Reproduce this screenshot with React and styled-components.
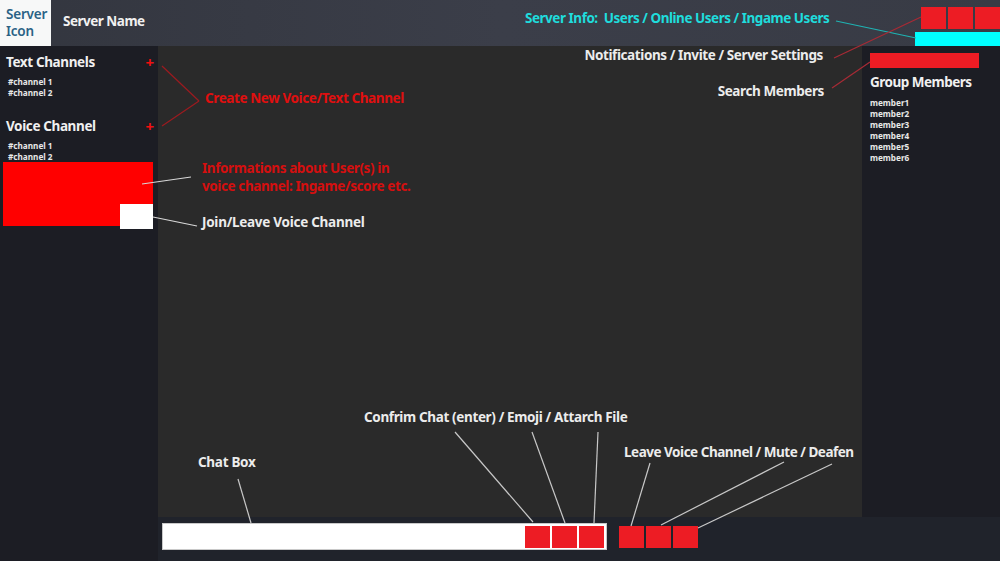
import styled, { createGlobalStyle } from 'styled-components';

const GlobalStyle = createGlobalStyle`
    html, body {
        margin: 0;
        padding: 0;
        background: #1c1d24;
    }
    body {
        font-family: "Noto Sans", "Open Sans", sans-serif;
    }
`;

const textChannels = ['#channel 1', '#channel 2'];
const voiceChannels = ['#channel 1', '#channel 2'];
const members = ['member1', 'member2', 'member3', 'member4', 'member5', 'member6'];

// leader lines between the notes and the parts they point at
const leaders = [
    { x1: 162, y1: 66, x2: 199, y2: 101, color: '#9c1a1f' },
    { x1: 199, y1: 101, x2: 162, y2: 126, color: '#9c1a1f' },
    { x1: 142, y1: 184, x2: 191, y2: 177, color: '#d8d8d8' },
    { x1: 153, y1: 217, x2: 197, y2: 226, color: '#d8d8d8' },
    { x1: 836, y1: 21, x2: 916, y2: 38, color: '#1fb3b3' },
    { x1: 834, y1: 58, x2: 921, y2: 17, color: '#a82a35' },
    { x1: 832, y1: 88, x2: 870, y2: 62, color: '#a82a35' },
    { x1: 238, y1: 479, x2: 251, y2: 523, color: '#c8c8c8' },
    { x1: 455, y1: 432, x2: 533, y2: 522, color: '#c8c8c8' },
    { x1: 532, y1: 432, x2: 565, y2: 523, color: '#c8c8c8' },
    { x1: 598, y1: 432, x2: 594, y2: 523, color: '#c8c8c8' },
    { x1: 650, y1: 463, x2: 631, y2: 526, color: '#c8c8c8' },
    { x1: 784, y1: 462, x2: 661, y2: 525, color: '#c8c8c8' },
    { x1: 832, y1: 464, x2: 698, y2: 528, color: '#c8c8c8' },
];

const App = () => {
    return (
        <Page>
            <GlobalStyle />
            <Header>
                <ServerIcon>Server Icon</ServerIcon>
                <ServerName>Server Name</ServerName>
                <HeaderRight>
                    <ButtonRow>
                        <RedButton />
                        <RedButton />
                        <RedButton />
                    </ButtonRow>
                    <ServerInfo />
                </HeaderRight>
            </Header>
            <Body>
                <Sidebar>
                    <SectionHead>
                        <SectionTitle>Text Channels</SectionTitle>
                        <Plus>+</Plus>
                    </SectionHead>
                    <ChannelList>
                        {textChannels.map((c, i) => <SmallItem key={i}>{c}</SmallItem>)}
                    </ChannelList>
                    <VoiceHead>
                        <SectionTitle>Voice Channel</SectionTitle>
                        <Plus>+</Plus>
                    </VoiceHead>
                    <ChannelList>
                        {voiceChannels.map((c, i) => <SmallItem key={i}>{c}</SmallItem>)}
                    </ChannelList>
                    <UserInfo>
                        <JoinButton />
                    </UserInfo>
                </Sidebar>
                <Main />
                <MemberPanel>
                    <SearchBox />
                    <MembersTitle>Group Members</MembersTitle>
                    <MemberList>
                        {members.map((m) => <SmallItem key={m}>{m}</SmallItem>)}
                    </MemberList>
                </MemberPanel>
            </Body>
            <Footer>
                <ChatBox>
                    <ChatButtons>
                        <RedButton />
                        <RedButton />
                        <RedButton />
                    </ChatButtons>
                </ChatBox>
                <VoiceButtons>
                    <RedButton />
                    <RedButton />
                    <RedButton />
                </VoiceButtons>
            </Footer>

            <Leaders viewBox="0 0 1000 561">
                {leaders.map((l, i) => (
                    <line key={i} x1={l.x1} y1={l.y1} x2={l.x2} y2={l.y2} stroke={l.color} strokeWidth="1.2" />
                ))}
            </Leaders>

            <Note $x={525} $y={8} $color="#1fdcdc" $spacing={-0.47}>Server Info:&nbsp; Users / Online Users / Ingame Users</Note>
            <Note $right={177} $y={45}>Notifications / Invite / Server Settings</Note>
            <Note $right={176} $y={81}>Search Members</Note>
            <Note $x={205} $y={88} $color="#e00f0f">Create New Voice/Text Channel</Note>
            <Note $x={202} $y={158} $color="#d40f0f">Informations about User(s) in</Note>
            <Note $x={202} $y={176} $color="#d40f0f">voice channel: Ingame/score etc.</Note>
            <Note $x={202} $y={212} $spacing={-0.27}>Join/Leave Voice Channel</Note>
            <Note $x={364} $y={407} $spacing={-0.36}>Confrim Chat (enter) / Emoji / Attarch File</Note>
            <Note $x={198} $y={452} $spacing={-0.3}>Chat Box</Note>
            <Note $x={624} $y={442} $spacing={-0.48}>Leave Voice Channel / Mute / Deafen</Note>
        </Page>
    );
}

const Page = styled.div`
    position: relative;
    width: 1000px;
    height: 561px;
    overflow: hidden;
    display: flex;
    flex-direction: column;
    background: #1c1d24;
`;

const Header = styled.header`
    height: 46px;
    flex: none;
    display: flex;
    align-items: stretch;
    background: linear-gradient(90deg, #33363f, #3b3e49 50%, #383b45);
`;
const ServerIcon = styled.div`
    width: 51px;
    box-sizing: border-box;
    padding: 6px 0 0 6px;
    background: #f7f8f8;
    color: #2a6285;
    font-size: 13.5px;
    font-weight: 600;
    line-height: 17px;
    letter-spacing: -0.2px;
`;
const ServerName = styled.div`
    margin: 0 0 4px 12px;
    align-self: center;
    color: #f0f0f0;
    font-size: 13.5px;
    font-weight: 700;
    letter-spacing: -0.5px;
`;
const HeaderRight = styled.div`
    margin-left: auto;
    padding-top: 7px;
    display: flex;
    flex-direction: column;
    align-items: flex-end;
    gap: 3px;
`;
const ButtonRow = styled.div`
    display: flex;
    gap: 2px;
`;
const RedButton = styled.div`
    width: 25px;
    height: 22px;
    background: #ed1c24;
`;
const ServerInfo = styled.div`
    width: 85px;
    height: 15px;
    background: #00ffff;
`;

const Body = styled.div`
    flex: 1;
    min-height: 0;
    display: flex;
`;
const Sidebar = styled.aside`
    width: 158px;
    flex: none;
    box-sizing: border-box;
    padding: 6px 0 0 3px;
    background: #1c1d24;
`;
const SectionHead = styled.div`
    display: flex;
    align-items: center;
    justify-content: space-between;
    padding: 0 4px 0 3px;
    height: 20px;
`;
const VoiceHead = styled(SectionHead)`
    margin-top: 18px;
`;
const SectionTitle = styled.div`
    color: #f0f0f0;
    font-size: 13.5px;
    font-weight: 700;
    letter-spacing: -0.38px;
`;
const Plus = styled.span`
    color: #f01010;
    font-size: 15px;
    font-weight: 700;
`;
const ChannelList = styled.div`
    margin-top: 4px;
    padding-left: 5px;
`;
const SmallItem = styled.div`
    color: #e8e8e8;
    font-size: 8.2px;
    font-weight: 700;
    line-height: 11px;
`;
const UserInfo = styled.div`
    position: relative;
    width: 150px;
    height: 64px;
    background: #ff0000;
`;
const JoinButton = styled.div`
    position: absolute;
    right: 0;
    bottom: -3px;
    width: 33px;
    height: 25px;
    background: #ffffff;
`;
const Main = styled.main`
    flex: 1;
    background: #2a2a2a;
`;
const MemberPanel = styled.aside`
    width: 138px;
    flex: none;
    box-sizing: border-box;
    padding: 7px 0 0 8px;
    background: #1c1d24;
`;
const SearchBox = styled.div`
    width: 109px;
    height: 15px;
    background: #ed1c24;
`;
const MembersTitle = styled.div`
    margin-top: 4px;
    color: #f0f0f0;
    font-size: 13.5px;
    font-weight: 700;
    line-height: 20px;
    letter-spacing: -0.5px;
`;
const MemberList = styled.div`
    margin-top: 5px;
`;

const Footer = styled.footer`
    height: 44px;
    flex: none;
    display: flex;
    align-items: flex-start;
    box-sizing: border-box;
    padding: 6px 0 0 162px;
    background: linear-gradient(90deg, #1c1d24 158px, #20232b 158px);
`;
const ChatBox = styled.div`
    width: 445px;
    height: 27px;
    box-sizing: border-box;
    padding: 2px 2px 0 0;
    display: flex;
    justify-content: flex-end;
    background: #ffffff;
    border: 1px solid #c9c9c9;
`;
const ChatButtons = styled.div`
    display: flex;
    gap: 2px;
`;
const VoiceButtons = styled.div`
    margin: 3px 0 0 12px;
    display: flex;
    gap: 2px;
`;

// everything below lies over the mockup: notes drawn on top of the screenshot
const Leaders = styled.svg`
    position: absolute;
    inset: 0;
    width: 1000px;
    height: 561px;
    pointer-events: none;
`;
const Note = styled.div`
    position: absolute;
    ${(p) => (p.$right !== undefined ? `right: ${p.$right}px;` : `left: ${p.$x}px;`)}
    top: ${(p) => p.$y}px;
    color: ${(p) => p.$color || '#ececec'};
    font-size: 13.5px;
    font-weight: 700;
    line-height: 20px;
    letter-spacing: ${(p) => p.$spacing ?? -0.4}px;
    white-space: nowrap;
`;

export default App;
